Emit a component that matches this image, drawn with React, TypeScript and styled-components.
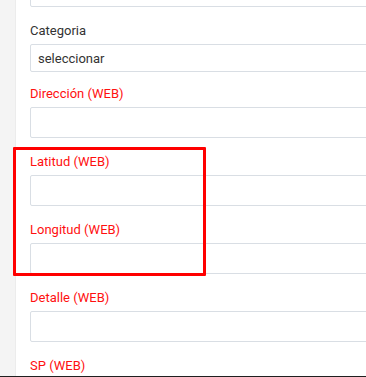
import styled, { createGlobalStyle } from 'styled-components';

const GlobalStyle = createGlobalStyle`
  html, body {
    margin: 0;
    padding: 0;
    background: #ffffff;
  }
  * {
    box-sizing: border-box;
  }
`;

const Page = styled.div`
  width: 366px;
  height: 377px;
  overflow: hidden;
  display: flex;
  border-bottom: 1px solid #1f1f1f;
  position: relative;
  font-family: Roboto, "Liberation Sans", Arial, sans-serif;
`;

const SideStrip = styled.div`
  width: 16px;
  flex-shrink: 0;
  background: #f4f4f4;
  border-right: 1px solid #ececec;
`;

const Content = styled.div`
  flex: 1;
  min-width: 0;
  padding-left: 14px;
  margin-top: -24px;
`;

const Form = styled.div`
  width: 420px;
  display: flex;
  flex-direction: column;
`;

const Field = styled.div<{ $tight?: boolean }>`
  display: flex;
  flex-direction: column;
  margin-bottom: ${p => (p.$tight ? '12px' : '14px')};
`;

const Label = styled.label<{ $web?: boolean }>`
  font-size: 13px;
  line-height: 20px;
  margin-bottom: 3px;
  color: ${p => (p.$web ? '#ff1010' : '#333333')};
`;

const Input = styled.div`
  height: 31px;
  border: 1px solid #d9dee4;
  border-radius: 2px;
  background: #ffffff;
`;

const Select = styled.div`
  height: 28px;
  border: 1px solid #d9dee4;
  border-radius: 2px;
  background: #ffffff;
  display: flex;
  align-items: center;
  padding-left: 7px;
  font-size: 13px;
  color: #333333;
`;

const Highlight = styled.div`
  position: absolute;
  left: 13px;
  top: 147px;
  width: 193px;
  height: 129px;
  border: 3px solid #ff0000;
  border-radius: 1px;
  pointer-events: none;
`;

const webFields = ['Dirección (WEB)', 'Latitud (WEB)', 'Longitud (WEB)', 'Detalle (WEB)', 'SP (WEB)'];

export default function App() {
  return (
    <>
      <GlobalStyle />
      <Page>
        <SideStrip />
        <Content>
          <Form>
            <Field>
              <Input />
            </Field>
            <Field $tight>
              <Label>Categoria</Label>
              <Select>seleccionar</Select>
            </Field>
            {webFields.map(name => (
              <Field key={name}>
                <Label $web>{name}</Label>
                <Input />
              </Field>
            ))}
          </Form>
        </Content>
        <Highlight />
      </Page>
    </>
  );
}
